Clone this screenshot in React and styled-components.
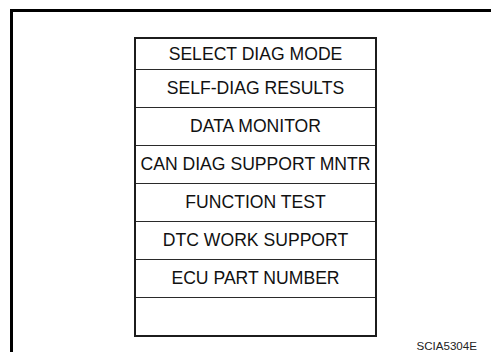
import React from 'react'
import styled, { createGlobalStyle } from 'styled-components'

const GlobalStyle = createGlobalStyle`
  html, body {
    margin: 0;
    padding: 0;
    background: #fff;
    overflow: hidden;
  }
  body {
    font-family: "Liberation Sans", Arial, sans-serif;
  }
`

// the drawing frame keeps going past the right and bottom edge of the shot
const Frame = styled.div`
  margin: 9px 0 0 10px;
  width: 481px;
  height: 343px;
  border-top: 3px solid #000;
  border-left: 3px solid #000;
  padding: 25px 0 0 121px;
  box-sizing: border-box;
  display: flex;
  flex-direction: column;
`

const Menu = styled.div`
  width: 243px;
  border: 2px solid #1c1c1c;
  box-sizing: border-box;
  display: flex;
  flex-direction: column;
`

const Item = styled.div`
  height: ${(p) => (p.$first ? 30 : 37)}px;
  border-top: ${(p) => (p.$first ? 'none' : '1px solid #2a2a2a')};
  display: flex;
  align-items: center;
  justify-content: center;
  font-size: 17.6px;
  color: #111;
  white-space: nowrap;
`

const Caption = styled.div`
  width: 343px;
  margin-top: 2px;
  text-align: right;
  font-size: 11.6px;
  color: #222;
  line-height: 14px;
`

const items = [
  'SELECT DIAG MODE',
  'SELF-DIAG RESULTS',
  'DATA MONITOR',
  'CAN DIAG SUPPORT MNTR',
  'FUNCTION TEST',
  'DTC WORK SUPPORT',
  'ECU PART NUMBER',
  '',
]

const App = () => {
  return (
    <>
      <GlobalStyle />
      <Frame>
        <Menu>
          {items.map((label, i) => (
            <Item key={i} $first={i === 0}>
              {label}
            </Item>
          ))}
        </Menu>
        <Caption>SCIA5304E</Caption>
      </Frame>
    </>
  )
}

export default App
